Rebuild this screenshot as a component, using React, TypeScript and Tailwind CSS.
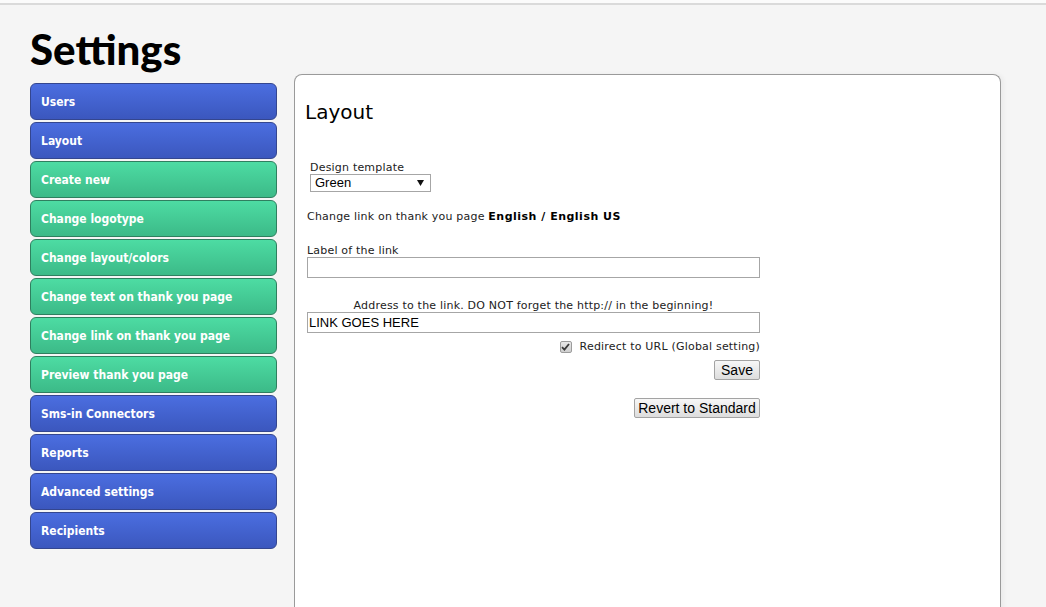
import React from "react";

const items: { label: string; color: "blue" | "green" }[] = [
  { label: "Users", color: "blue" },
  { label: "Layout", color: "blue" },
  { label: "Create new", color: "green" },
  { label: "Change logotype", color: "green" },
  { label: "Change layout/colors", color: "green" },
  { label: "Change text on thank you page", color: "green" },
  { label: "Change link on thank you page", color: "green" },
  { label: "Preview thank you page", color: "green" },
  { label: "Sms-in Connectors", color: "blue" },
  { label: "Reports", color: "blue" },
  { label: "Advanced settings", color: "blue" },
  { label: "Recipients", color: "blue" },
];

const verdana = { fontFamily: '"DejaVu Sans", Verdana, sans-serif' };

export default function App() {
  return (
    <div className="min-h-[607px] w-[1046px] overflow-hidden bg-[#f5f5f5]">
      <div className="h-[3px] bg-[#fbfbfb]" />
      <div className="h-[2px] bg-[#dadada]" />
      <div className="pl-[30px]">
        <h1
          className="h-[69px] pt-[22px] text-[42px] font-black leading-[44px] tracking-[0px] text-black"
          style={{ fontFamily: 'Lato, "Noto Sans", sans-serif' }}
        >
          Settings
        </h1>
        <div className="flex items-start gap-[17px]">
          <nav className="mt-[9px] flex w-[247px] flex-col gap-[2px]">
            {items.map((it) => (
              <div
                key={it.label}
                className={
                  "flex h-[37px] items-center rounded-[6px] border pl-[10px] text-[12px] font-bold text-white " +
                  (it.color === "blue"
                    ? "border-[#34468f] bg-gradient-to-b from-[#4b6ee0] to-[#3b57be]"
                    : "border-[#2f7f5f] bg-gradient-to-b from-[#4ddca3] to-[#3cba88]")
                }
                style={{ fontFamily: '"DejaVu Sans Condensed", "DejaVu Sans", sans-serif', fontStretch: "condensed" }}
              >
                {it.label}
              </div>
            ))}
          </nav>
          <main className="h-[545px] w-[707px] rounded-t-[8px] border border-b-0 border-[#9a9a9a] bg-white shadow-[3px_0_4px_rgba(0,0,0,0.04)]">
            <h2
              className="mt-[24px] pl-[10px] text-[20px] leading-[26px] text-black"
              style={verdana}
            >
              Layout
            </h2>
            <div className="ml-[12px] w-[453px] text-[11px] tracking-[0.2px] text-[#222]" style={verdana}>
              <div className="mt-[37px] pl-[3px] leading-[12px]">Design template</div>
              <div
                className="ml-[3px] flex h-[18px] w-[121px] items-center justify-between border border-[#a6a6a6] bg-white pl-[4px] pr-[6px] text-[13px] tracking-normal text-black"
                style={{ fontFamily: '"Liberation Sans", Arial, sans-serif' }}
              >
                <span>Green</span>
                <svg width="7" height="6" viewBox="0 0 7 6">
                  <path d="M0 0 L7 0 L3.5 6 Z" fill="#111" />
                </svg>
              </div>
              <div className="mt-[18px] leading-[13px]">
                Change link on thank you page <b className="tracking-[0.5px] text-black">English / English US</b>
              </div>
              <div className="mt-[22px] leading-[12px]">Label of the link</div>
              <div className="h-[21px] w-[453px] border border-[#a6a6a6] bg-white" />
              <div className="mt-[22px] text-center leading-[12px]">
                Address to the link. DO NOT forget the http:// in the beginning!
              </div>
              <div
                className="flex h-[21px] w-[453px] items-center border border-[#a6a6a6] bg-white pl-[1px] text-[13px] tracking-normal text-black"
                style={{ fontFamily: '"Liberation Sans", Arial, sans-serif' }}
              >
                LINK GOES HERE
              </div>
              <div className="mt-[7px] flex items-center justify-end leading-[14px]">
                <span className="mr-[8px] flex h-[12px] w-[12px] items-center justify-center rounded-[2px] border border-[#9c9c9c] bg-gradient-to-b from-[#e8e8e8] to-[#cfcfcf]">
                  <svg width="9" height="8" viewBox="0 0 9 8">
                    <path d="M1 4.2 L3.4 6.6 L8 1" fill="none" stroke="#3a3a3a" strokeWidth="1.8" />
                  </svg>
                </span>
                <span>Redirect to URL (Global setting)</span>
              </div>
              <div className="mt-[6px] flex justify-end">
                <button
                  className="h-[20px] w-[46px] rounded-[2px] border border-[#a3a3a3] bg-gradient-to-b from-[#f7f7f7] to-[#dddddd] text-[14px] leading-[18px] tracking-normal text-black"
                  style={{ fontFamily: '"Liberation Sans", Arial, sans-serif' }}
                >
                  Save
                </button>
              </div>
              <div className="mt-[18px] flex justify-end">
                <button
                  className="h-[20px] w-[126px] rounded-[2px] border border-[#a3a3a3] bg-gradient-to-b from-[#f7f7f7] to-[#dddddd] text-[14px] leading-[18px] tracking-normal text-black"
                  style={{ fontFamily: '"Liberation Sans", Arial, sans-serif' }}
                >
                  Revert to Standard
                </button>
              </div>
            </div>
          </main>
        </div>
      </div>
    </div>
  );
}
